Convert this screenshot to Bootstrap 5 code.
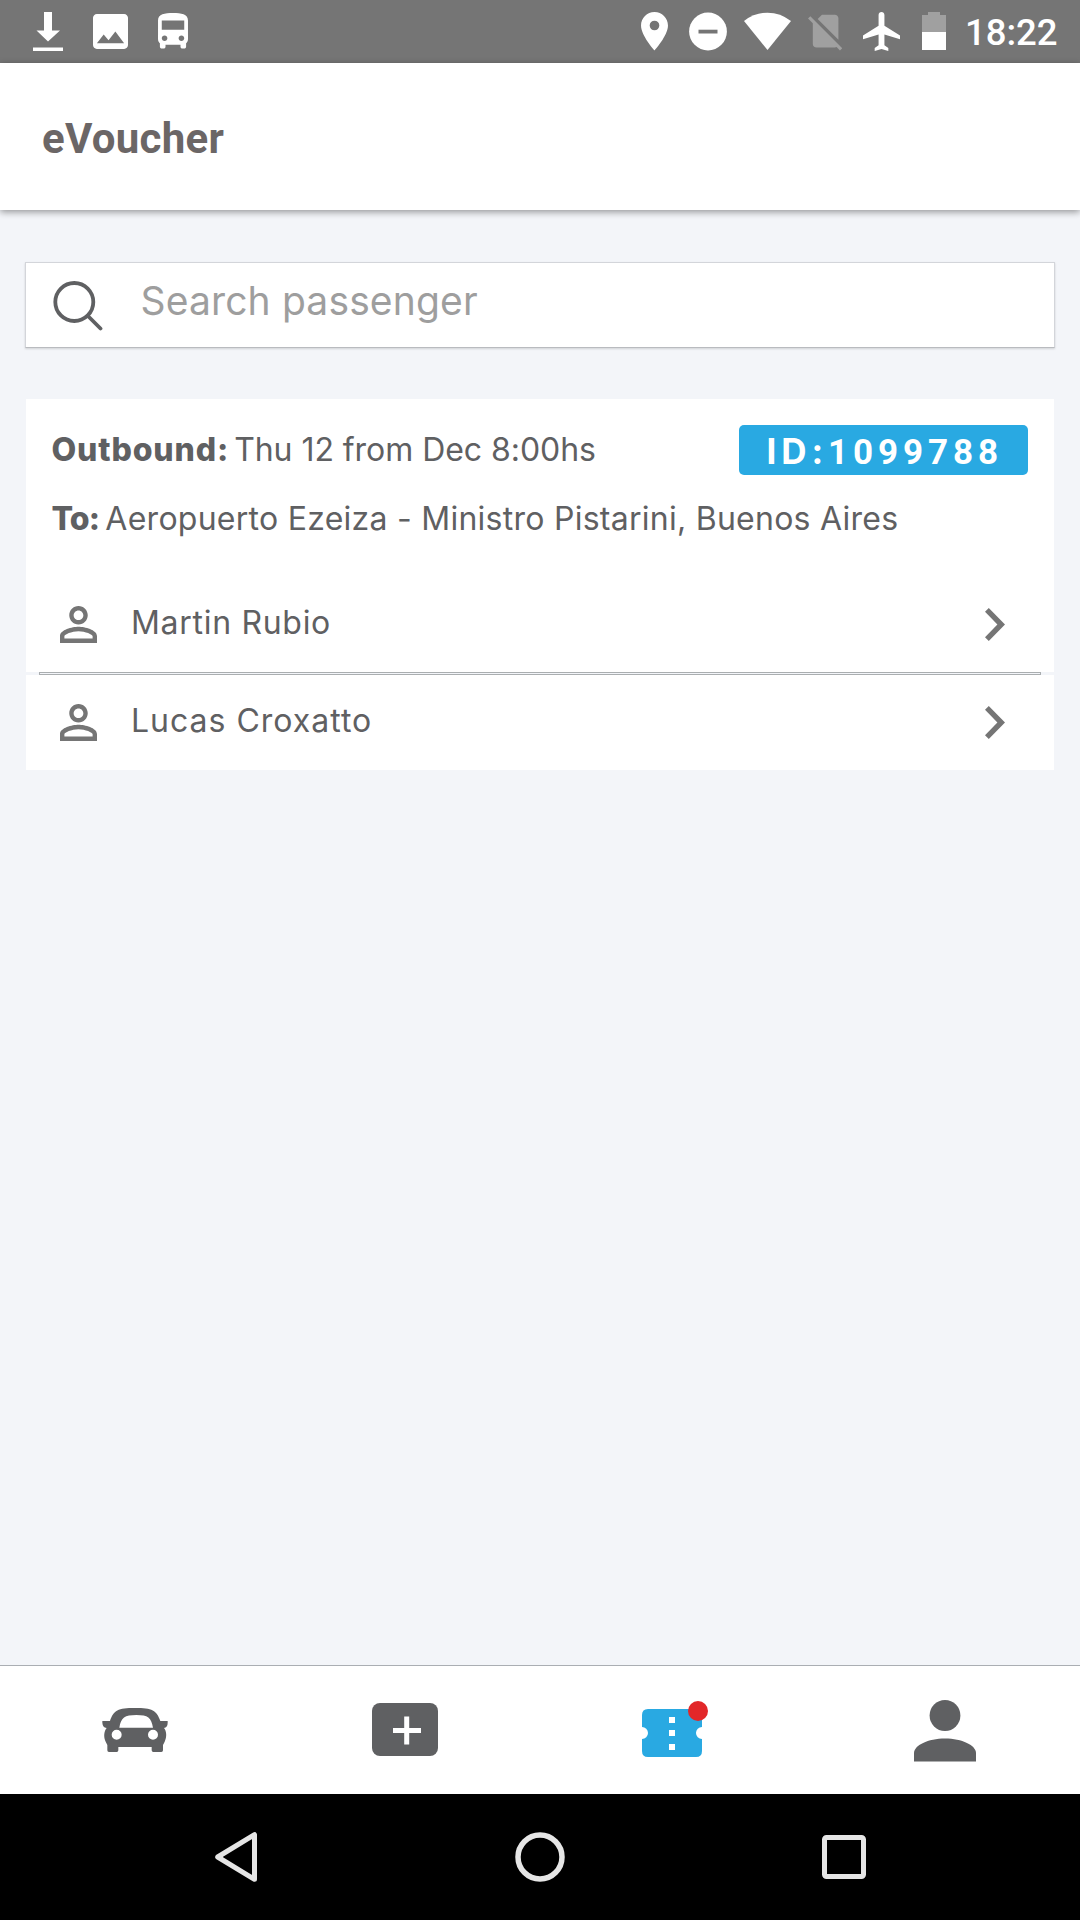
<!DOCTYPE html>
<html lang="en">
<head>
<meta charset="utf-8">
<meta name="viewport" content="width=device-width, initial-scale=1">
<title>eVoucher</title>
<link href="https://cdn.jsdelivr.net/npm/bootstrap@5.3.0/dist/css/bootstrap.min.css" rel="stylesheet">
<style>
  :root { --ink: #5f6062; --page: #f3f5f9; --accent: #29a9e2; }
  body { background: var(--page); color: var(--ink); font-family: Inter, "Open Sans", sans-serif; font-size: 32px; }
  svg { display: block; flex: none; }
  .screen { width: 1080px; height: 1920px; }
  .status { height: 63px; background: #757575; padding: 12px 21px 0 33px; color: #fff; }
  .status-left { gap: 30px; }
  .pin { margin-right: 21.5px; }
  .wifi { margin: 0 17px; }
  .plane { margin: 0 22px 0 20.700px; }
  .clock { font: 500 36.5px/42px Roboto, sans-serif; margin-left: 19px; width: 94px; white-space: nowrap; }
  .app-header { height: 147px; padding: 5px 42px 0; box-shadow: 0 2px 7px rgba(0,0,0,.4); z-index: 1; }
  .app-title { font: 700 42px/1 Roboto, sans-serif; letter-spacing: .3px; color: #6b6666; }
  .search { height: 86px; margin: 52px 25px 0; padding-left: 27px; border: 1px solid #d3d5da; border-bottom-color: #b9bbbf; box-shadow: 0 1px 2px rgba(0,0,0,.15); }
  .search svg { margin-top: 2px; }
  .search .form-control { font-size: 39px; color: var(--ink); letter-spacing: .15px; padding: 0 0 9px 37.5px; height: 100%; }
  .search .form-control::placeholder { color: #9e9e9e; opacity: 1; }
  .trip { margin: 51px 26px 0; }
  .trip-info { height: 178px; padding: 26px 26px 0 25.500px; background: #fff; line-height: 49px; white-space: nowrap; }
  .trip-line { height: 50px; }
  .trip-line + .trip-line { margin-top: 18px; padding-top: 1px; }
  .trip-line strong { font-weight: 800; }
  .k-out { letter-spacing: .85px; margin-right: 5px; }
  .k-to { letter-spacing: -.8px; margin-right: 6px; }
  .v-time { letter-spacing: -.05px; }
  .v-place { letter-spacing: .26px; }
  .trip-id { width: 289px; height: 50px; border-radius: 5px; background: var(--accent); color: #fff; font-size: 35px; line-height: 53px; letter-spacing: 4.9px; padding-left: 27.500px; font-weight: 700; }
  .trip-id span { font-family: Roboto, sans-serif; }
  .passenger { height: 95px; background: #fff; padding: 0 49px 0 34px; }
  .passenger-name { margin-left: 34px; padding-bottom: 4px; letter-spacing: .7px; line-height: 48px; }
  .passenger-name.wide { letter-spacing: 1px; }
  .rule { height: 3px; margin: 0 13px; border: 1px solid #aaaeb0; }
  .tabs { height: 129px; border-top: 1px solid #aaaeb3; color: var(--ink); }
  .tab-mid { padding-bottom: 2px; }
  .tab-low { padding-top: 2px; }
  .sysnav { height: 126px; }
  .sysnav div { width: 304px; }
</style>
<script src="https://cdn.jsdelivr.net/npm/bootstrap@5.3.0/dist/js/bootstrap.bundle.min.js"></script>
</head>
<body>
<svg width="0" height="0" class="position-absolute">
  <symbol id="person" viewBox="4 4 16 16"><path fill="#757575" d="M12 5.9c1.16 0 2.1.94 2.1 2.1s-.94 2.1-2.1 2.1S9.9 9.16 9.9 8s.94-2.1 2.1-2.1m0 9c2.97 0 6.1 1.46 6.1 2.1v1.1H5.9V17c0-.64 3.13-2.1 6.1-2.1M12 4C9.79 4 8 5.79 8 8s1.79 4 4 4 4-1.79 4-4-1.79-4-4-4zm0 9c-2.67 0-8 1.34-8 4v3h16v-3c0-2.66-5.33-4-8-4z"/></symbol>
  <symbol id="chevron" viewBox="0 0 20 33"><path fill="#757575" d="M3.8 0 20 16.5 3.8 33 0 29.2 12.4 16.5 0 3.8z"/></symbol>
</svg>
<div class="screen d-flex flex-column overflow-hidden">
  <div class="status d-flex align-items-start">
    <div class="status-left d-flex me-auto">
      <svg width="30" height="39" viewBox="0 0 30 39" fill="#fff"><path d="M11 0h8v18.500h8L15 29.500 3.500 18.500H11zM0 35.500h30v4H0z"/></svg>
      <svg width="35" height="37" viewBox="3 2 18 19" fill="#fff"><path d="M21 19V5c0-1.100-.9-2-2-2H5c-1.100 0-2 .9-2 2v14c0 1.100.9 2 2 2h14c1.100 0 2-.9 2-2zM8.500 13.500l2.500 3.010L14.500 12l4.500 6H5l3.500-4.500z"/></svg>
      <svg width="30" height="36.500" viewBox="4 1.500 16 19.500" fill="#fff"><path d="M4 16c0 .88.39 1.670 1 2.220V20c0 .55.45 1 1 1h1c.55 0 1-.45 1-1v-1h8v1c0 .55.45 1 1 1h1c.55 0 1-.45 1-1v-1.780c.61-.55 1-1.340 1-2.220V6c0-3.500-3.580-4-8-4s-8 .5-8 4v10zm3.500 1c-.83 0-1.500-.67-1.500-1.500S6.670 14 7.500 14s1.500.67 1.500 1.500S8.330 17 7.500 17zm9 0c-.83 0-1.500-.67-1.500-1.500s.67-1.500 1.500-1.500 1.500.67 1.500 1.500-.67 1.500-1.500 1.500zm1.500-6H6V6h12v5z"/></svg>
    </div>
    <div class="d-flex">
      <svg class="pin" width="27" height="38.500" viewBox="5 2 14 20" fill="#fff"><path d="M12 2C8.130 2 5 5.130 5 9c0 5.250 7 13 7 13s7-7.750 7-13c0-3.870-3.130-7-7-7zm0 9.500a2.500 2.500 0 1 1 0-5 2.500 2.500 0 0 1 0 5z"/></svg>
      <svg width="38" height="39" viewBox="0 0 38 39"><circle cx="19" cy="19.500" r="18.900" fill="#fff"/><path fill="#757575" d="M9.500 17.700h19v3.800h-19z"/></svg>
      <svg class="wifi" width="47" height="38" viewBox="14 22 140 113" fill="#fff"><path d="M84 135 14 49Q45 24 84 24T154 49z"/></svg>
      <svg width="34.300" height="39" viewBox="2.380 1.800 18.740 20.820" fill="#a0a0a0"><path d="M19 5c0-1.100-.9-2-2-2h-7L7.660 5.340 19 16.680V5zM3.650 3.880 2.380 5.150 5 7.770V19c0 1.100.9 2 2 2h10.010c.35 0 .67-.1.96-.26l1.880 1.880 1.270-1.270z"/></svg>
      <svg class="plane" width="37" height="39" viewBox="2 2 19 20" fill="#fff"><path d="M21 16v-2l-8-5V3.500c0-.83-.67-1.500-1.500-1.500S10 2.670 10 3.500V9l-8 5v2l8-2.500V19l-2 1.500V22l3.500-1 3.500 1v-1.500L13 19v-5.500l8 2.500z"/></svg>
      <svg width="24" height="38" viewBox="0 0 24 38"><path fill="#a0a0a0" d="M6 0h12v3h6v17H0V3h6z"/><path fill="#fff" d="M0 20h24v18H0z"/></svg>
    </div>
    <div class="clock">18:22</div>
  </div>

  <header class="app-header bg-white d-flex align-items-center position-relative">
    <h1 class="app-title mb-0">eVoucher</h1>
  </header>

  <main class="flex-grow-1">
    <div class="search bg-white d-flex align-items-center">
      <svg width="50" height="50" viewBox="0 0 50 50" fill="none" stroke="#5f6062" stroke-width="3.800" stroke-linecap="round"><circle cx="21.300" cy="21" r="19"/><path d="m35 35 12.500 12.500"/></svg>
      <input class="form-control border-0 rounded-0 shadow-none bg-transparent" type="text" placeholder="Search passenger" aria-label="Search passenger">
    </div>

    <section class="trip">
      <div class="trip-info">
        <div class="trip-line d-flex">
          <strong class="k-out">Outbound:</strong><span class="v-time">Thu 12 from Dec 8:00hs</span>
          <div class="trip-id ms-auto">ID:<span>1099788</span></div>
        </div>
        <div class="trip-line d-flex">
          <strong class="k-to">To:</strong><span class="v-place">Aeropuerto Ezeiza - Ministro Pistarini, Buenos Aires</span>
        </div>
      </div>
      <div class="passenger d-flex align-items-center">
        <svg width="37" height="37"><use href="#person"/></svg>
        <span class="passenger-name me-auto">Martin Rubio</span>
        <svg width="20" height="33"><use href="#chevron"/></svg>
      </div>
      <div class="rule"></div>
      <div class="passenger d-flex align-items-center">
        <svg width="37" height="37"><use href="#person"/></svg>
        <span class="passenger-name wide me-auto">Lucas Croxatto</span>
        <svg width="20" height="33"><use href="#chevron"/></svg>
      </div>
    </section>
  </main>

  <nav class="tabs row g-0 bg-white align-items-center">
    <div class="col d-flex justify-content-center">
      <svg width="66" height="44" viewBox="21 39 198 132" fill="currentColor"><path fill-rule="evenodd" d="M22 78h23C56 46 68 39 120 39s65 7 76 39h22v5c0 10-4 15-11 16 8 9 9 27 2 41l-5 10v16q0 5-5 5h-24q-5 0-5-5v-10H70v10q0 5-5 5H42q-5 0-5-5v-16l-5-10c-7-14-5-32 3-41-9-1-12-6-13-16zm51 20h101c-5-30-15-38-50-38s-46 8-51 38zm7 21a15 15 0 1 0-30 0 15 15 0 0 0 30 0zm109 0a15 15 0 1 0-30 0 15 15 0 0 0 30 0z"/></svg>
    </div>
    <div class="col tab-mid d-flex justify-content-center">
      <svg width="66" height="53" viewBox="0 0 66 53"><rect width="66" height="53" rx="8" fill="currentColor"/><path stroke="#fff" stroke-width="5" d="M21 27.500h28M34.700 13.500v28"/></svg>
    </div>
    <div class="col tab-mid d-flex justify-content-center">
      <svg width="66" height="58" viewBox="0 0 66 58"><path fill="#29a9e2" d="M6 9h48q6 0 6 6v12a6 6 0 0 0 0 12v12q0 6-6 6H6q-6 0-6-6V39a6 6 0 0 0 0-12V15q0-6 6-6z"/><path fill="#fff" d="M27 17h6v6h-6zM27 30h6v6h-6zM27 44h6v6h-6z"/><circle cx="56" cy="11" r="10" fill="#e22729"/></svg>
    </div>
    <div class="col tab-low d-flex justify-content-center">
      <svg width="62" height="62" viewBox="0 0 62 62" fill="currentColor"><circle cx="31" cy="15.500" r="15.400"/><path d="M0 61.500V53C0 45.500 14 38.500 31 38.500S62 45.500 62 53v8.500z"/></svg>
    </div>
  </nav>

  <div class="sysnav bg-black d-flex justify-content-center align-items-center">
    <div class="d-flex justify-content-center"><svg width="42" height="50" viewBox="0 0 42 50" fill="none" stroke="#e6e6e6" stroke-width="5" stroke-linejoin="round"><path d="M39.500 2.700v44.600L2.700 25z"/></svg></div>
    <div class="d-flex justify-content-center"><svg width="50" height="50" viewBox="0 0 50 50" fill="none" stroke="#e6e6e6" stroke-width="5.500"><circle cx="25" cy="25" r="22"/></svg></div>
    <div class="d-flex justify-content-center"><svg width="44" height="44" viewBox="0 0 44 44" fill="none" stroke="#e6e6e6" stroke-width="5"><rect x="2.500" y="2.500" width="39" height="39" rx="2"/></svg></div>
  </div>
</div>
</body>
</html>
